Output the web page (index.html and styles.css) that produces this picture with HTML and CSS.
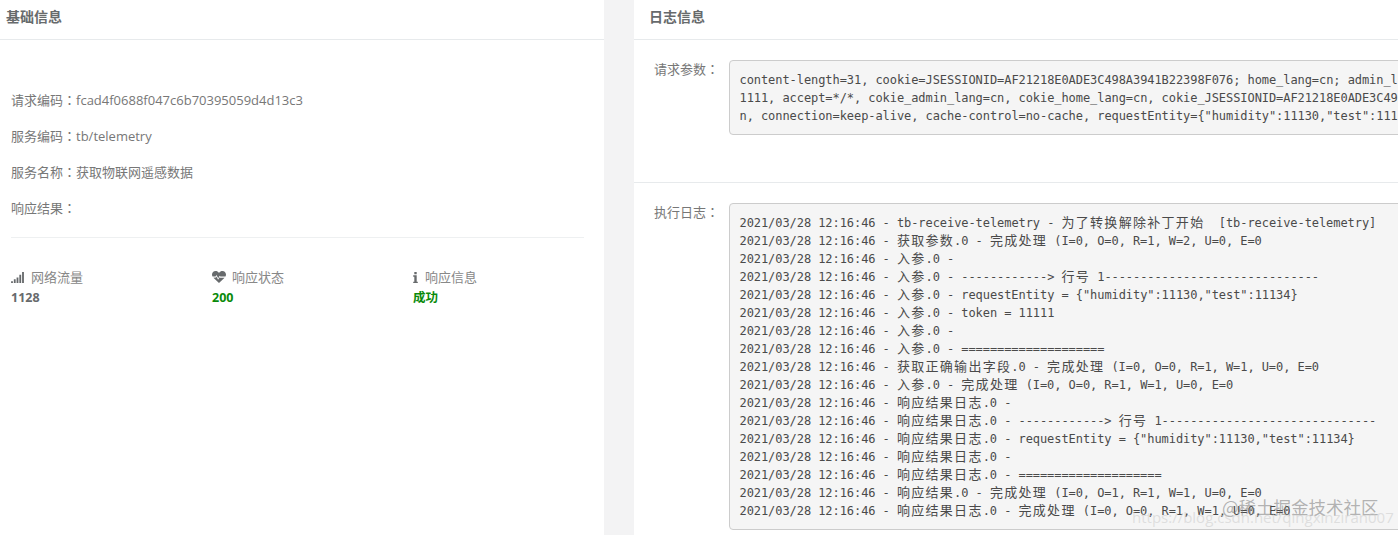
FILE: index.html
```html
<!DOCTYPE html>
<html lang="zh-CN">
<head>
<meta charset="utf-8">
<title>日志详情</title>
<link rel="stylesheet" href="styles.css">
</head>
<body>
<div class="page">
  <section class="panel panel-left">
    <header class="panel-title">基础信息</header>
    <div class="basic">
      <p class="field">请求编码<span class="colon" lang="zh-TW">：</span>fcad4f0688f047c6b70395059d4d13c3</p>
      <p class="field">服务编码<span class="colon" lang="zh-TW">：</span>tb/telemetry</p>
      <p class="field">服务名称<span class="colon" lang="zh-TW">：</span>获取物联网遥感数据</p>
      <p class="field">响应结果<span class="colon" lang="zh-TW">：</span></p>
      <div class="rule"></div>
      <div class="stats">
        <div>
          <div class="stat-label">
            <svg class="icon icon-signal" viewBox="0 0 14 12"><path d="M0 10h2v2H0zM3 8h2v4H3zM6 6h2v6H6zM9 3h2v9H9zM12 0h2v12h-2z"/></svg>
            <span>网络流量</span>
          </div>
          <div class="stat-value">1128</div>
        </div>
        <div>
          <div class="stat-label">
            <svg class="icon icon-heart" viewBox="0 0 14 12"><path d="M7 1.900C6 .6 4.900 0 3.600 0 1.500 0 0 1.600 0 3.600c0 .7.200 1.400.5 2h3l1-1.700 1.700 3.300 1.500-2.500.7.900h5.100c.3-.6.500-1.300.5-2C14 1.600 12.500 0 10.400 0 9.100 0 8 .6 7 1.900zM1.400 6.800 7 12l5.600-5.200H8.100l-.5-.6-1.500 2.500-1.600-3.100-.5.900z"/></svg>
            <span>响应状态</span>
          </div>
          <div class="stat-value ok">200</div>
        </div>
        <div>
          <div class="stat-label">
            <svg class="icon icon-info" viewBox="0 0 5 12"><path d="M1.200 0h2.600v2.400H1.200zM0 3.600h3.800v6.900H5V12H0v-1.500h1.200V5.100H0z"/></svg>
            <span>响应信息</span>
          </div>
          <div class="stat-value ok">成功</div>
        </div>
      </div>
    </div>
  </section>
  <div class="gutter"></div>
  <section class="panel panel-right">
    <header class="panel-title">日志信息</header>
    <div class="log-row log-row-params">
      <div class="log-label">请求参数<span class="colon" lang="zh-TW">：</span></div>
      <pre class="code">content-length=31, cookie=JSESSIONID=AF21218E0ADE3C498A3941B22398F076; home_lang=cn; admin_lang=cn
1111, accept=*/*, cokie_admin_lang=cn, cokie_home_lang=cn, cokie_JSESSIONID=AF21218E0ADE3C498A3941B22398F076
n, connection=keep-alive, cache-control=no-cache, requestEntity={"humidity":11130,"test":11134}</pre>
    </div>
    <div class="log-row">
      <div class="log-label">执行日志<span class="colon" lang="zh-TW">：</span></div>
      <pre class="code">2021/03/28 12:16:46 - tb-receive-telemetry - <span class="z">为了转换解除补丁开始</span>  [tb-receive-telemetry]
2021/03/28 12:16:46 - <span class="z">获取参数</span>.0 - <span class="z">完成处理</span> (I=0, O=0, R=1, W=2, U=0, E=0
2021/03/28 12:16:46 - <span class="z">入参</span>.0 -
2021/03/28 12:16:46 - <span class="z">入参</span>.0 - ------------&gt; <span class="z">行号</span> 1------------------------------
2021/03/28 12:16:46 - <span class="z">入参</span>.0 - requestEntity = {"humidity":11130,"test":11134}
2021/03/28 12:16:46 - <span class="z">入参</span>.0 - token = 11111
2021/03/28 12:16:46 - <span class="z">入参</span>.0 -
2021/03/28 12:16:46 - <span class="z">入参</span>.0 - ====================
2021/03/28 12:16:46 - <span class="z">获取正确输出字段</span>.0 - <span class="z">完成处理</span> (I=0, O=0, R=1, W=1, U=0, E=0
2021/03/28 12:16:46 - <span class="z">入参</span>.0 - <span class="z">完成处理</span> (I=0, O=0, R=1, W=1, U=0, E=0
2021/03/28 12:16:46 - <span class="z">响应结果日志</span>.0 -
2021/03/28 12:16:46 - <span class="z">响应结果日志</span>.0 - ------------&gt; <span class="z">行号</span> 1------------------------------
2021/03/28 12:16:46 - <span class="z">响应结果日志</span>.0 - requestEntity = {"humidity":11130,"test":11134}
2021/03/28 12:16:46 - <span class="z">响应结果日志</span>.0 -
2021/03/28 12:16:46 - <span class="z">响应结果日志</span>.0 - ====================
2021/03/28 12:16:46 - <span class="z">响应结果</span>.0 - <span class="z">完成处理</span> (I=0, O=1, R=1, W=1, U=0, E=0
2021/03/28 12:16:46 - <span class="z">响应结果日志</span>.0 - <span class="z">完成处理</span> (I=0, O=0, R=1, W=1, U=0, E=0</pre>
    </div>
  </section>
</div>
<div class="watermark">
  <div class="wm-brand">@稀土掘金技术社区</div>
  <div class="wm-url">https://blog.csdn.net/qingxinziran007</div>
</div>
</body>
</html>
```
FILE: styles.css
```css
* { box-sizing: border-box; }
html, body {
  margin: 0;
  height: 100%;
  overflow: hidden;
  background: #fff;
}
body {
  font-family: "Open Sans", "Noto Sans CJK SC", sans-serif;
  font-size: 13px;
  line-height: 18px;
  color: #777;
}
.colon { font-family: "Noto Sans CJK TC", sans-serif; }
.page {
  display: flex;
  height: 535px;
  width: 1398px;
  overflow: hidden;
}
.panel { background: #fff; }
.panel-left { width: 604px; flex: none; }
.gutter { width: 30px; flex: none; background: #f3f3f4; }
.panel-right { flex: 1; min-width: 0; overflow: hidden; }
.panel-title {
  height: 40px;
  border-bottom: 1px solid #e7eaec;
  padding: 8px 0 0 6px;
  font-size: 14px;
  font-weight: 700;
  color: #676a6c;
}
.panel-right .panel-title { padding-left: 15px; }
.basic { padding: 51px 20px 0 11px; }
.field { margin: 0 0 18px; }
.rule { height: 1px; background: #eef0f1; margin-top: 20px; }
.stats {
  display: grid;
  grid-template-columns: repeat(3, 1fr);
  gap: 30px;
  margin-top: 27px;
}
.stat-label {
  display: flex;
  align-items: center;
  height: 24px;
  color: #888;
}
.icon { fill: #676a6c; flex: none; display: block; }
.icon-signal { width: 13px; height: 11px; margin-right: 7px; }
.icon-heart { width: 14px; height: 12px; margin-right: 6px; }
.icon-info { width: 5px; height: 11px; margin-right: 7px; }
.stat-value { font-size: 12.500px; font-weight: 700; color: #676a6c; }
.stat-value.ok { color: #0a8a0a; }
.log-row {
  display: flex;
  padding: 20px 0 0 20px;
}
.log-row-params {
  height: 143px;
  border-bottom: 1px solid #e7eaec;
}
.log-label {
  width: 75px;
  flex: none;
  line-height: 18px;
  color: #777;
}
.code {
  flex: none;
  width: 900px;
  height: max-content;
  margin: 0;
  padding: 10px 9.500px 9px;
  border: 1px solid #ccc;
  border-radius: 4px;
  background: #f5f5f5;
  font-family: "DejaVu Sans Mono", "Noto Sans CJK SC", monospace;
  font-size: 12px;
  letter-spacing: -0.070px;
  line-height: 18px;
  color: #4a4a4a;
  white-space: pre;
  overflow: hidden;
}
.z { font-size: 13px; letter-spacing: 1.300px; }
.watermark {
  position: absolute;
  left: 1132px;
  top: 496px;
  width: 266px;
  pointer-events: none;
}
.wm-brand {
  margin-left: 90px;
  font-family: "Noto Sans CJK SC", sans-serif;
  font-size: 17.500px;
  line-height: 22px;
  white-space: nowrap;
  color: rgba(120, 120, 120, .55);
}
.wm-url {
  margin-top: -12px;
  font-family: "Open Sans", sans-serif;
  font-size: 15px;
  line-height: 22px;
  white-space: nowrap;
  color: rgba(200, 200, 200, .5);
}
```
